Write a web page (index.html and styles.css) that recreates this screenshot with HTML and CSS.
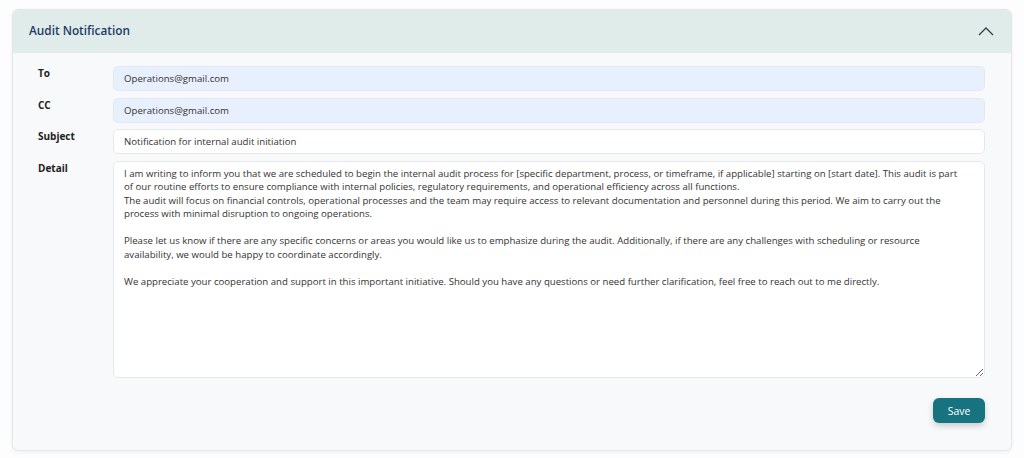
FILE: index.html
```html
<!DOCTYPE html>
<html>
<head>
<meta charset="utf-8">
<link rel="stylesheet" href="styles.css">
</head>
<body>
<div class="card">
  <div class="card-header">
    <span class="title">Audit Notification</span>
    <svg class="chev" width="16" height="10" viewBox="0 0 16 10"><path d="M1 9 L8 2 L15 9" fill="none" stroke="#3a3f47" stroke-width="1.3"/></svg>
  </div>
  <div class="card-body">
    <div class="row">
      <label class="lbl">To</label>
      <input class="field auto" type="text" value="Operations@gmail.com">
    </div>
    <div class="row">
      <label class="lbl">CC</label>
      <input class="field auto" type="text" value="Operations@gmail.com">
    </div>
    <div class="row">
      <label class="lbl">Subject</label>
      <input class="field" type="text" value="Notification for internal audit initiation">
    </div>
    <div class="row">
      <label class="lbl">Detail</label>
      <textarea class="field area" wrap="off">I am writing to inform you that we are scheduled to begin the internal audit process for [specific department, process, or timeframe, if applicable] starting on [start date]. This audit is part
of our routine efforts to ensure compliance with internal policies, regulatory requirements, and operational efficiency across all functions.
The audit will focus on financial controls, operational processes and the team may require access to relevant documentation and personnel during this period. We aim to carry out the
process with minimal disruption to ongoing operations.

Please let us know if there are any specific concerns or areas you would like us to emphasize during the audit. Additionally, if there are any challenges with scheduling or resource
availability, we would be happy to coordinate accordingly.

We appreciate your cooperation and support in this important initiative. Should you have any questions or need further clarification, feel free to reach out to me directly.</textarea>
    </div>
    <div class="actions">
      <button class="save">Save</button>
    </div>
  </div>
</div>
</body>
</html>
```

FILE: styles.css
```css
* { box-sizing: border-box; }
body {
  margin: 0;
  background: #fdfdfd;
  font-family: "Open Sans", "Noto Sans", sans-serif;
  padding: 9px 12px 8px 12px;
}
.card {
  width: 1000px;
  border: 1px solid #e4e7ea;
  border-radius: 6px;
  background: #f8f9fb;
  box-shadow: 0 1px 4px rgba(0,0,0,0.06);
  overflow: hidden;
}
.card-header {
  height: 43px;
  background: #dfecea;
  display: flex;
  align-items: center;
  justify-content: space-between;
  padding: 0 17px 2px 16px;
  border-bottom: 1px solid #e6ecec;
}
.title {
  font-size: 11.8px;
  font-weight: 600;
  color: #1f3b66;
}
.chev { display: block; margin-top: 1px; }
.card-body {
  padding: 13px 26px 27px 25px;
  display: flex;
  flex-direction: column;
  gap: 6.6px;
}
.row {
  display: flex;
  align-items: flex-start;
}
.lbl {
  width: 75px;
  flex: none;
  font-size: 10px;
  font-weight: 700;
  color: #222;
  padding-top: 0;
}
.field {
  flex: 1;
  height: 25px;
  border: 1px solid #e5e8ec;
  border-radius: 5px;
  background: #fff;
  font-family: inherit;
  font-size: 9.65px;
  color: #333;
  padding: 0 10px;
  outline: none;
}
.field.auto {
  background: #e8f0fe;
  border-color: #e2e9f5;
}
.area {
  height: 217px;
  padding: 5px 10px;
  line-height: 13.5px;
  resize: vertical;
  white-space: pre;
  overflow: hidden;
}
.actions {
  display: flex;
  justify-content: flex-end;
  margin-top: 14px;
}
.save {
  width: 52px;
  height: 25px;
  border: none;
  border-radius: 6px;
  background: #177380;
  color: #fff;
  font-family: inherit;
  font-size: 10.5px;
  font-weight: 500;
  box-shadow: 0 3px 6px rgba(0,0,0,0.18);
}
```
